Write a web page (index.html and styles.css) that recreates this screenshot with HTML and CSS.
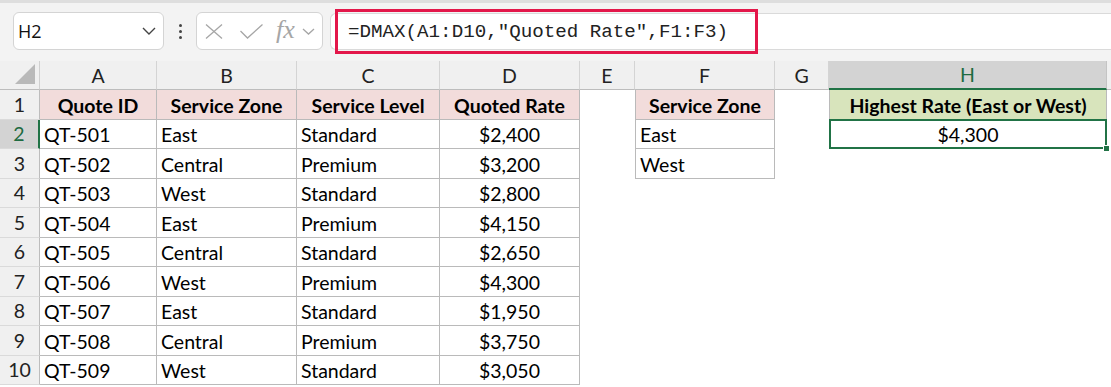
FILE: index.html
```html
<!DOCTYPE html>
<html lang="en">
<head>
    <meta charset="UTF-8">
    <meta name="viewport" content="width=device-width, initial-scale=1.0">
    <title>DMAX example</title>
    <link rel="stylesheet" href="styles.css">
</head>
<body>
    <div class="toolbar">
        <div class="name-box">
            <span>H2</span>
            <svg class="chevron" width="14" height="8" viewBox="0 0 14 8"><path d="M1 1 L7 7 L13 1" fill="none" stroke="#444" stroke-width="1.4"/></svg>
        </div>
        <div class="dots">
            <span></span><span></span><span></span>
        </div>
        <div class="fx-box">
            <svg width="18" height="15" viewBox="0 0 18 15"><path d="M1 0.5 L17 14.5 M17 0.5 L1 14.5" stroke="#a6a6a6" stroke-width="1.3"/></svg>
            <svg width="23" height="15" viewBox="0 0 23 15"><path d="M0.5 7 L7.5 14 L22.5 0.5" fill="none" stroke="#a6a6a6" stroke-width="1.3"/></svg>
            <span class="fx">fx</span>
            <svg class="chevron-small" width="13" height="7" viewBox="0 0 13 7"><path d="M1 1 L6.5 6 L12 1" fill="none" stroke="#a6a6a6" stroke-width="1.3"/></svg>
        </div>
        <div class="formula-bar">
            <div class="formula">=DMAX(A1:D10,"Quoted Rate",F1:F3)</div>
        </div>
    </div>

    <div class="sheet">
        <!-- column headers -->
        <div class="corner"><div class="corner-tri"></div></div>
        <div class="col-head">A</div>
        <div class="col-head">B</div>
        <div class="col-head">C</div>
        <div class="col-head">D</div>
        <div class="col-head">E</div>
        <div class="col-head">F</div>
        <div class="col-head">G</div>
        <div class="col-head selected">H</div>
        <div class="col-head last"></div>

        <!-- row 1 -->
        <div class="row-head">1</div>
        <div class="cell t head">Quote ID</div>
        <div class="cell t head">Service Zone</div>
        <div class="cell t head">Service Level</div>
        <div class="cell t head">Quoted Rate</div>
        <div class="cell"></div>
        <div class="cell t tl head">Service Zone</div>
        <div class="cell"></div>
        <div class="cell t tl head-green">Highest Rate (East or West)</div>
        <div class="cell"></div>

        <!-- row 2 -->
        <div class="row-head selected">2</div>
        <div class="cell t">QT-501</div>
        <div class="cell t">East</div>
        <div class="cell t">Standard</div>
        <div class="cell t num">$2,400</div>
        <div class="cell"></div>
        <div class="cell t tl">East</div>
        <div class="cell"></div>
        <div class="cell active num">$4,300<span class="handle"></span></div>
        <div class="cell"></div>

        <!-- row 3 -->
        <div class="row-head">3</div>
        <div class="cell t">QT-502</div>
        <div class="cell t">Central</div>
        <div class="cell t">Premium</div>
        <div class="cell t num">$3,200</div>
        <div class="cell"></div>
        <div class="cell t tl">West</div>
        <div class="cell"></div>
        <div class="cell"></div>
        <div class="cell"></div>

        <!-- row 4 -->
        <div class="row-head">4</div>
        <div class="cell t">QT-503</div>
        <div class="cell t">West</div>
        <div class="cell t">Standard</div>
        <div class="cell t num">$2,800</div>
        <div class="cell wide"></div>

        <!-- row 5 -->
        <div class="row-head">5</div>
        <div class="cell t">QT-504</div>
        <div class="cell t">East</div>
        <div class="cell t">Premium</div>
        <div class="cell t num">$4,150</div>
        <div class="cell wide"></div>

        <!-- row 6 -->
        <div class="row-head">6</div>
        <div class="cell t">QT-505</div>
        <div class="cell t">Central</div>
        <div class="cell t">Standard</div>
        <div class="cell t num">$2,650</div>
        <div class="cell wide"></div>

        <!-- row 7 -->
        <div class="row-head">7</div>
        <div class="cell t">QT-506</div>
        <div class="cell t">West</div>
        <div class="cell t">Premium</div>
        <div class="cell t num">$4,300</div>
        <div class="cell wide"></div>

        <!-- row 8 -->
        <div class="row-head">8</div>
        <div class="cell t">QT-507</div>
        <div class="cell t">East</div>
        <div class="cell t">Standard</div>
        <div class="cell t num">$1,950</div>
        <div class="cell wide"></div>

        <!-- row 9 -->
        <div class="row-head">9</div>
        <div class="cell t">QT-508</div>
        <div class="cell t">Central</div>
        <div class="cell t">Premium</div>
        <div class="cell t num">$3,750</div>
        <div class="cell wide"></div>

        <!-- row 10 -->
        <div class="row-head">10</div>
        <div class="cell t">QT-509</div>
        <div class="cell t">West</div>
        <div class="cell t">Standard</div>
        <div class="cell t num">$3,050</div>
        <div class="cell wide"></div>
    </div>
</body>
</html>
```

FILE: styles.css
```css
* {
    box-sizing: border-box;
    margin: 0;
    padding: 0;
}

body {
    width: 1111px;
    height: 387px;
    overflow: hidden;
    background: #fff;
    font-family: 'Lato', 'Liberation Sans', sans-serif;
    color: #000;
}

/* Formula toolbar */
.toolbar {
    height: 61px;
    background: #f3f3f3;
    border-top: 3px solid #dedede;
    display: flex;
    align-items: flex-start;
    padding: 9px 0 0 13px;
}

.name-box {
    width: 151px;
    height: 38px;
    background: #fff;
    border: 1px solid #d4d4d4;
    border-radius: 6px;
    display: flex;
    align-items: center;
    justify-content: space-between;
    padding: 0 7px 0 4px;
    font-family: 'Open Sans', 'Noto Sans', sans-serif;
    font-size: 18px;
    color: #111;
}

.dots {
    width: 32px;
    height: 38px;
    display: flex;
    flex-direction: column;
    align-items: center;
    justify-content: center;
    gap: 3px;
}

.dots span {
    width: 3px;
    height: 3px;
    border-radius: 50%;
    background: #444;
}

.fx-box {
    width: 127px;
    height: 38px;
    background: #fff;
    border: 1px solid #d4d4d4;
    border-radius: 6px;
    display: flex;
    align-items: center;
    padding-left: 8px;
}

.fx-box svg:nth-child(2) {
    margin-left: 17px;
}

.fx {
    margin-left: 13px;
    font-family: 'Liberation Serif', serif;
    font-style: italic;
    font-size: 26px;
    color: #a6a6a6;
    line-height: 1;
    margin-top: -3px;
}

.chevron-small {
    margin-left: 7px;
}

.formula-bar {
    flex: 1;
    height: 37px;
    margin: 1px 0 0 7px;
    background: #fff;
    border: 1px solid #dadada;
    border-right: none;
    border-radius: 6px 0 0 6px;
    display: flex;
    align-items: center;
}

.formula {
    margin: -6px 0 -6px 4px;
    height: 45px;
    width: 423px;
    border: 3px solid #e3174a;
    display: flex;
    align-items: center;
    padding-left: 10px;
    font-family: 'Liberation Mono', 'DejaVu Sans Mono', monospace;
    font-size: 19.2px;
    color: #222;
    white-space: pre;
}

/* Worksheet grid */
.sheet {
    display: grid;
    grid-template-columns: 40px 117px 140px 143px 140px 55px 140px 54px 278px 1fr;
    grid-template-rows: 29px repeat(10, 29.5px);
    font-size: 19.5px;
}

.corner {
    background: #f0f0f0;
    border-right: 1px solid #d0d0d0;
    border-bottom: 1px solid #bdbdbd;
    position: relative;
}

.corner-tri {
    position: absolute;
    right: 4px;
    bottom: 5px;
    width: 0;
    height: 0;
    border-left: 20px solid transparent;
    border-bottom: 20px solid #b9b9b9;
}

.col-head {
    background: #f0f0f0;
    border-right: 1px solid #d4d4d4;
    border-bottom: 1px solid #bdbdbd;
    display: flex;
    align-items: center;
    justify-content: center;
    color: #222;
}

.col-head.selected {
    background: #d3d3d3;
    color: #1e6b41;
    border-bottom: 2px solid #217346;
    border-right: 1px solid #c4c4c4;
}

.col-head.last {
    border-right: none;
}

.row-head {
    background: #f0f0f0;
    border-right: 1px solid #bdbdbd;
    border-bottom: 1px solid #dadada;
    display: flex;
    align-items: center;
    justify-content: center;
    color: #222;
}

.row-head.selected {
    background: #d3d3d3;
    color: #1e6b41;
    border-right: 2px solid #217346;
}

.cell {
    display: flex;
    align-items: center;
    padding: 2px 4px 0;
    white-space: nowrap;
}

.cell.wide {
    grid-column: 6 / 11;
}

.t {
    border-right: 1px solid #bababa;
    border-bottom: 1px solid #bababa;
}

.tl {
    border-left: 1px solid #bababa;
}

.head {
    background: #f2dcdb;
    font-weight: bold;
    justify-content: center;
}

.head-green {
    background: #d8e4bc;
    font-weight: bold;
    justify-content: center;
}

.num {
    justify-content: center;
}

.active {
    border: 2px solid #217346;
    position: relative;
    margin-top: -1px;
}

.handle {
    position: absolute;
    right: -5px;
    bottom: -5px;
    width: 7px;
    height: 7px;
    background: #217346;
    border: 1px solid #fff;
}
```
